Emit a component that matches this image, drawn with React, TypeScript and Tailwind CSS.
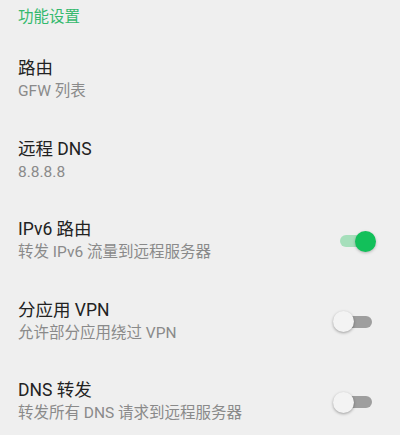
import React from "react";

const font = { fontFamily: 'Roboto, "Noto Sans CJK SC", sans-serif' };

function Toggle({ on }: { on: boolean }) {
  return (
    <div className="relative w-[43px] h-[24px] shrink-0 mt-[2px]">
      <div
        className={
          "absolute left-[7px] top-[6px] w-[32px] h-[12px] rounded-full " +
          (on ? "bg-[#a6dfbb]" : "bg-[#9e9e9e]")
        }
      />
      <div
        className={
          "absolute top-[1.5px] w-[21px] h-[21px] rounded-full " +
          (on
            ? "left-[22px] bg-[#12c05a] shadow-[0_1px_3px_rgba(0,0,0,0.25)]"
            : "left-0 bg-[#f3f3f3] shadow-[0_1px_3px_rgba(0,0,0,0.35)]")
        }
      />
    </div>
  );
}

const rows: { title: string; sub: string; toggle?: boolean }[] = [
  { title: "路由", sub: "GFW 列表" },
  { title: "远程 DNS", sub: "8.8.8.8" },
  { title: "IPv6 路由", sub: "转发 IPv6 流量到远程服务器", toggle: true },
  { title: "分应用 VPN", sub: "允许部分应用绕过 VPN", toggle: false },
  { title: "DNS 转发", sub: "转发所有 DNS 请求到远程服务器", toggle: false },
];

export default function App() {
  return (
    <div className="w-[400px] h-[435px] bg-[#efefef] overflow-hidden" style={font}>
      <div className="h-[39px] pl-[18px] pt-[7px] text-[15.5px] leading-[20px] text-[#34b96d]">
        功能设置
      </div>
      {rows.map((r, i) => (
        <div key={i} className="h-[80.5px] flex items-center pl-[18px] pr-[24px]">
          <div className="flex-1 flex flex-col">
            <div className="text-[17.5px] leading-[24px] text-[#222222]">{r.title}</div>
            <div className="text-[15.5px] leading-[22px] text-[#8a8a8a]">{r.sub}</div>
          </div>
          {r.toggle !== undefined && <Toggle on={r.toggle} />}
        </div>
      ))}
    </div>
  );
}
